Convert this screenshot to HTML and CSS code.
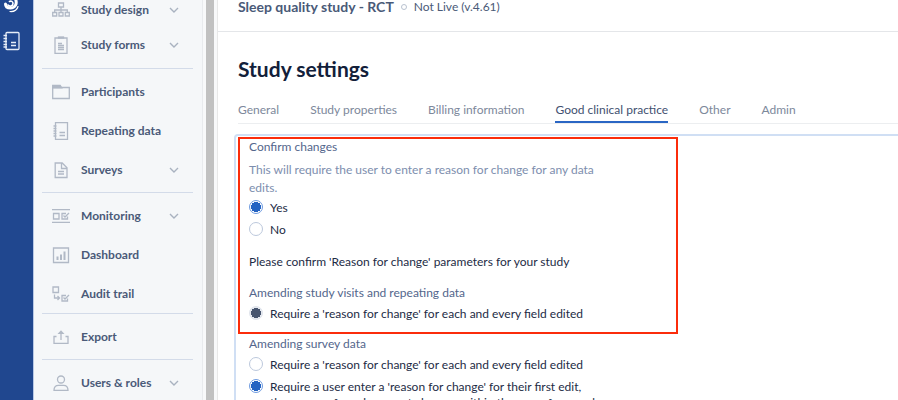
FILE: index.html
```html
<!DOCTYPE html>
<html lang="en">
<head>
<meta charset="utf-8">
<title>Study settings</title>
<link rel="stylesheet" href="styles.css">
</head>
<body>
<div class="app">
  <div class="rail">
    <svg class="logo" width="18" height="18" viewBox="0 0 18 18" fill="none" stroke="#fff" stroke-linecap="round"><path d="M13.500 4c2 5-.5 9-5 9-3.500 0-5-2-5-4" stroke-width="3"/><path d="M6 10c1.500 2 5 1 5-1.500 0-2-2-3-3.500-2" stroke-width="1.600"/><path d="M8 16.500c4 .3 7-1.500 8-5" stroke-width="1.200"/></svg>
    <svg width="18" height="20" viewBox="0 0 18 20" fill="none" stroke="#e6edf8" stroke-width="1.300"><rect x="4" y="1.500" width="13" height="17" rx="1"/><path d="M1.500 4.500h3.500M1.500 7.500h3.500M1.500 10.500h3.500M1.500 13.500h3.500M1.500 16h3.500M9 11.500h5M9 14.500h5"/></svg>
  </div>
  <nav class="sidebar" aria-label="Study">
    <div class="group group-first">
      <a class="item" href="#"><svg class="icon" viewBox="0 0 18 18"><path d="M6.500 2h5v4h-5zM.7 11.500h4v3.500h-4zM7 11.500h4v3.500H7zM13.300 11.500h4v3.500h-4zM9 6v5.500M2.700 11.500V9h12.600v2.500"/></svg>Study design<svg class="chevron" viewBox="0 0 10 6"><path d="M1 1l4 4 4-4"/></svg></a>
      <a class="item" href="#"><svg class="icon" viewBox="0 0 18 18"><path d="M3 2h12v15.400H3z"/><path d="M6.500 1h5v1h-5z" class="solid"/><path d="M6 7.500h4M6 9.500h6M6 11.500h6M6 13.500h6"/></svg>Study forms<svg class="chevron" viewBox="0 0 10 6"><path d="M1 1l4 4 4-4"/></svg></a>
    </div>
    <div class="group">
      <a class="item" href="#"><svg class="icon" viewBox="0 0 18 18"><path d="M.7 4.500h16.600v11H.7z"/><path d="M.7 2.300h7.500l1.500 2.500h-9z" class="solid"/></svg>Participants</a>
      <a class="item" href="#"><svg class="icon" viewBox="0 0 18 18"><path d="M3.500.7h12v16.600h-12zM1.500 4h3M1.500 6.500h3M1.500 9h3M1.500 11.500h3M1.500 14h3M7.500 10.500h5.500M7.500 13.500h5.500"/></svg>Repeating data</a>
      <a class="item" href="#"><svg class="icon" viewBox="0 0 18 18"><path d="M3.200 2h7l4.800 4.800V16.500H3.200zM9.500 2v5.500H15M6 10.500h6M6 13h6"/></svg>Surveys<svg class="chevron" viewBox="0 0 10 6"><path d="M1 1l4 4 4-4"/></svg></a>
    </div>
    <div class="group group-tight">
      <a class="item" href="#"><svg class="icon" viewBox="0 0 18 18"><path d="M0 2.700h18M0 15.300h18M1.500 6.500h5.500v5.500H1.500zM14 6.500h-4v5.500h5.500V9.500M11.500 8.500l1.500 1.500 4-4"/></svg>Monitoring<svg class="chevron" viewBox="0 0 10 6"><path d="M1 1l4 4 4-4"/></svg></a>
      <a class="item" href="#"><svg class="icon" viewBox="0 0 18 18"><path d="M1.500 2h15v14.500h-15z"/><path d="M4.500 10.500h2v3.500h-2zM8 8.500h2v5.500H8zM11.500 5.500h2V14h-2z" class="fill"/></svg>Dashboard</a>
      <a class="item" href="#"><svg class="icon" viewBox="0 0 18 18"><path d="M1 2h5.500v5.500H1zM2.500 9.500v3.500H7M5.500 11l2 2-2 2M14 10.500h-4v5.500h5.500V13.500M11.500 12.500l1.500 1.500 4-4"/></svg>Audit trail</a>
    </div>
    <div class="group">
      <a class="item" href="#"><svg class="icon" viewBox="0 0 18 18"><path d="M4.500 8.500H2v6.800h14V8.500h-2.500M9 12V5"/><path d="M5.500 6L9 2.300 12.500 6z" class="fill"/></svg>Export</a>
    </div>
    <div class="group">
      <a class="item" href="#"><svg class="icon" viewBox="0 0 18 18"><circle cx="9" cy="5.500" r="3.500"/><path d="M2 16.300c0-3.500 2-5 4.500-5h5c2.500 0 4.500 1.500 4.500 5z"/></svg>Users &amp; roles<svg class="chevron" viewBox="0 0 10 6"><path d="M1 1l4 4 4-4"/></svg></a>
    </div>
  </nav>
  <div class="scrollbar"></div>
  <main class="main">
    <header class="topbar"><strong>Sleep quality study - RCT</strong><span class="dot"></span><span class="status">Not Live (v.4.61)</span></header>
    <div class="content">
      <h1>Study settings</h1>
      <nav class="tabs" aria-label="Settings">
        <a href="#">General</a><a href="#">Study properties</a><a href="#">Billing information</a><a href="#" class="active" aria-current="page">Good clinical practice</a><a href="#">Other</a><a href="#">Admin</a>
      </nav>
      <form class="panel">
        <div class="marked">
          <fieldset>
            <legend>Confirm changes</legend>
            <p class="help">This will require the user to enter a reason for change for any data edits.</p>
            <label><input type="radio" name="confirm" checked>Yes</label>
            <label><input type="radio" name="confirm">No</label>
          </fieldset>
          <p class="note">Please confirm 'Reason for change' parameters for your study</p>
          <fieldset>
            <legend>Amending study visits and repeating data</legend>
            <label><input type="radio" name="visits" checked disabled>Require a 'reason for change' for each and every field edited</label>
          </fieldset>
        </div>
        <fieldset>
          <legend>Amending survey data</legend>
          <label><input type="radio" name="survey">Require a 'reason for change' for each and every field edited</label>
          <label><input type="radio" name="survey" checked>Require a user enter a 'reason for change' for their first edit, then re-use for subsequent changes within the same form and session</label>
        </fieldset>
      </form>
    </div>
  </main>
</div>
</body>
</html>
```
FILE: styles.css
```css
* { box-sizing: border-box; }
body {
  margin: 0;
  font: 12px/18px Lato, "Liberation Sans", sans-serif;
  color: #1d2b45;
  background: #fff;
}
a { color: inherit; text-decoration: none; }
.app { display: flex; height: 100vh; overflow: hidden; }

.rail {
  flex: 0 0 34px;
  display: flex;
  flex-direction: column;
  align-items: center;
  gap: 18px;
  padding-right: 12px;
  background: #20478f;
  border-right: 1px solid #b9c9e6;
}
.rail svg { flex: none; }
.rail .logo { margin-top: -5px; }

.sidebar {
  flex: 0 0 169px;
  padding: 0 9px 0 8px;
  background: #f5f7f9;
  border-right: 1px solid #e9ebee;
}
.group {
  display: flex;
  flex-direction: column;
  gap: 4px;
  padding: 5px 0;
  border-bottom: 1px solid #d3dbe9;
}
.group-first { gap: 0; margin-top: -8px; padding: 0 0 6px; }
.group-tight { padding-bottom: 2px; }
.item {
  display: flex;
  align-items: center;
  height: 35px;
  padding: 0 14px 0 10px;
  font-weight: 700;
  color: #4a5a78;
}
.icon {
  width: 18px;
  height: 18px;
  margin-right: 11px;
  fill: none;
  stroke: #b1b9c6;
  stroke-width: 1.3;
}
.icon .solid { fill: #b1b9c6; }
.icon .fill { fill: #b1b9c6; stroke: none; }
.chevron {
  width: 10px;
  height: 6px;
  margin-left: auto;
  fill: none;
  stroke: #a9b2c0;
  stroke-width: 1.4;
}
.scrollbar {
  flex: 0 0 14px;
  background: #c1c1c1;
  border: solid #f8f9fa;
  border-width: 0 3px;
}

.main { flex: 1; min-width: 0; border-left: 1px solid #e8e8e8; }
.topbar {
  display: flex;
  align-items: center;
  height: 32px;
  padding: 0 20px 18px;
  border-bottom: 1px solid #e4e6e9;
  color: #4a5a78;
}
.topbar strong { font-size: 14px; }
.dot {
  width: 6px;
  height: 6px;
  margin: 0 7px;
  border: 1px solid #b9c2d0;
  border-radius: 50%;
}
.content { padding: 23px 0 0 20px; }
h1 { margin: 0; font-size: 21px; line-height: 28px; color: #12203a; }
.tabs {
  display: flex;
  gap: 31px;
  margin-top: 16px;
  border-bottom: 1px solid #eceef0;
  color: #7d889b;
}
.tabs a { padding: 2px 0; border-bottom: 2px solid transparent; }
.tabs .active { color: #3f5070; border-color: #2a66c4; }

.panel {
  margin: 10px -10px 0 -4px;
  padding: 1px 0 0 2px;
  border: 2px solid #d0dff4;
  border-radius: 4px;
}
.marked {
  width: 440px;
  max-width: 100%;
  padding-bottom: 7px;
  border: 2px solid #fb2c0b;
}
fieldset { min-width: 0; max-width: 365px; margin: 0; padding: 0 0 0 9px; border: 0; }
.panel > fieldset { margin: 2px 0 0 2px; }
legend { padding: 0 0 2px; line-height: 16px; color: #53668c; }
.help { margin: 4px 0 0; color: #7d8eae; }
.note { margin: 12px 0 14px; padding-left: 9px; }
label { display: flex; gap: 7px; padding: 3px 0; line-height: 16px; }
input {
  flex: none;
  appearance: none;
  width: 14px;
  height: 14px;
  margin: 0;
  border: 1px solid #bcc8dc;
  border-radius: 50%;
  background: #fff;
}
input:checked { border-color: #6f9be0; background: radial-gradient(circle, #2463c2 5px, #fff 5px); }
input:disabled { border-color: #dfe4ec; background: radial-gradient(circle, #47556f 5px, #e6e9ef 5px); }
```
